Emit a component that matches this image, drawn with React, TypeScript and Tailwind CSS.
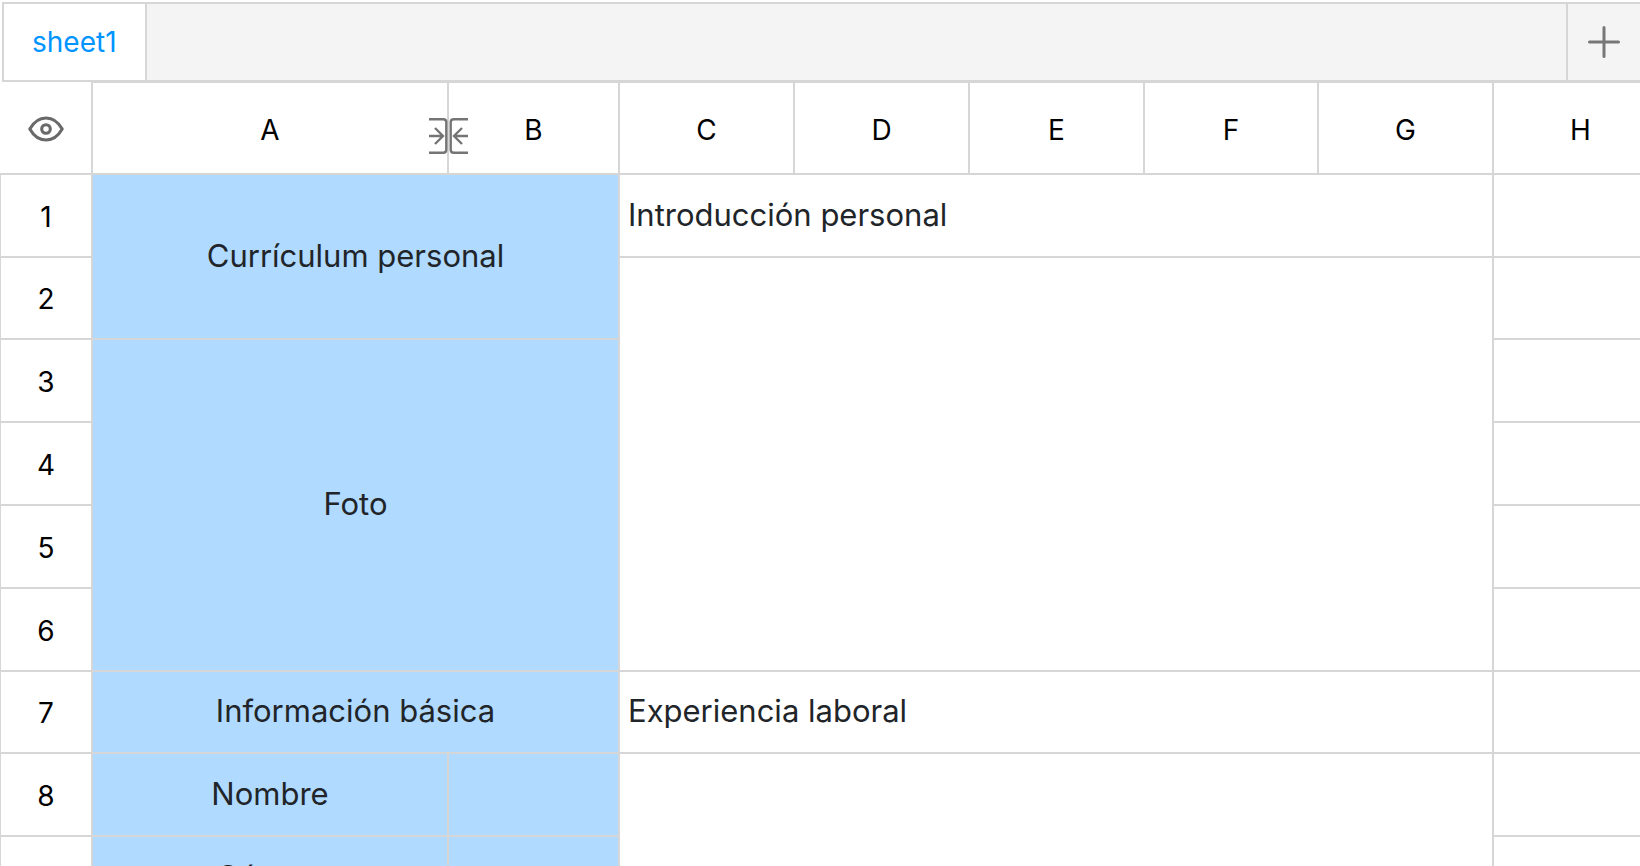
import React from 'react';

interface Column {
  label: string;
  width: string;
}

interface Cell {
  text?: string;
  colSpan?: number;
  rowSpan?: number;
  filled?: boolean;
}

const columns: Column[] = [
  { label: 'A', width: 'w-[356px]' },
  { label: 'B', width: 'w-[171px]' },
  { label: 'C', width: 'w-[175px]' },
  { label: 'D', width: 'w-[175px]' },
  { label: 'E', width: 'w-[175px]' },
  { label: 'F', width: 'w-[174px]' },
  { label: 'G', width: 'w-[175px]' },
  { label: 'H', width: 'w-[175px]' },
];

// One entry per row, merged cells only appear in the row they start in
const rows: Cell[][] = [
  [
    { text: 'Currículum personal', colSpan: 2, rowSpan: 2, filled: true },
    { text: 'Introducción personal', colSpan: 5 },
    {},
  ],
  [{ colSpan: 5, rowSpan: 5 }, {}],
  [{ text: 'Foto', colSpan: 2, rowSpan: 4, filled: true }, {}],
  [{}],
  [{}],
  [{}],
  [
    { text: 'Información básica', colSpan: 2, filled: true },
    { text: 'Experiencia laboral', colSpan: 5 },
    {},
  ],
  [{ text: 'Nombre', filled: true }, { filled: true }, { colSpan: 5, rowSpan: 2 }, {}],
  [{ text: 'Género', filled: true }, { filled: true }, {}],
];

const EyeIcon = () => (
  <svg width="36" height="26" viewBox="0 0 36 26" fill="none" stroke="#696969" strokeWidth="3.1">
    <path d="M1.8 13C5.5 6.5 11 2 18 2S30.5 6.5 34.2 13C30.5 19.5 25 24 18 24S5.5 19.5 1.8 13Z" strokeLinejoin="round" />
    <circle cx="18" cy="13" r="4.3" />
  </svg>
);

const PlusIcon = () => (
  <svg width="32" height="32" viewBox="0 0 32 32" fill="none" stroke="#777777" strokeWidth="3" strokeLinecap="round">
    <path d="M16 1.5V30.5M1.5 16H30.5" />
  </svg>
);

const ResizeIcon = () => (
  <svg width="39" height="36" viewBox="0 0 39 36" fill="none" stroke="#757575" strokeWidth="2.4">
    <path d="M0 1.2H14.3Q17.3 1.2 17.3 4.2V31.8Q17.3 34.8 14.3 34.8H0" />
    <path d="M39 1.2H24.7Q21.7 1.2 21.7 4.2V31.8Q21.7 34.8 24.7 34.8H39" />
    <path d="M0 18H14M6 10L14 18L6 26" />
    <path d="M39 18H25M33 10L25 18L33 26" />
  </svg>
);

const SheetTabs = () => (
  <div className="ml-[2px] flex h-20 border-y-2 border-l-2 border-[#d6d6d6] bg-[#f4f4f4]">
    <button className="border-r-2 border-[#d6d6d6] bg-white px-7 text-[28px] text-[#0094ff]">sheet1</button>
    <div className="flex-1" />
    <button
      aria-label="Add sheet"
      className="flex w-[74px] items-center justify-center border-l-2 border-[#d6d6d6]"
    >
      <PlusIcon />
    </button>
  </div>
);

const App: React.FC = () => {
  return (
    <div className="h-screen overflow-hidden bg-white pt-[2px] font-['Inter','Liberation_Sans',sans-serif]">
      <SheetTabs />

      {/* Grid */}
      <table className="w-max table-fixed border-separate border-spacing-0">
        <thead>
          <tr className="h-[93px] text-[28px] text-black">
            <th className="w-[93px] border-r-2 border-b-2 border-[#d6d6d6] px-0 pt-[2px] pb-0">
              <button aria-label="Show or hide" className="flex w-full items-center justify-center">
                <EyeIcon />
              </button>
            </th>
            {columns.map((column) => (
              <th
                key={column.label}
                className={`${column.width} relative border-t border-r-2 border-b-2 border-[#d6d6d6] px-0 pt-[3px] pb-0 font-normal`}
              >
                {column.label}
                {column.label === 'A' && (
                  <span className="absolute top-[35px] -right-[21px] z-10 cursor-col-resize">
                    <ResizeIcon />
                  </span>
                )}
              </th>
            ))}
          </tr>
        </thead>
        <tbody>
          {rows.map((cells, index) => (
            <tr key={index} className={index % 5 === 1 ? 'h-[82px]' : 'h-[83px]'}>
              <th className="border-r-2 border-b-2 border-l border-[#d6d6d6] px-0 pt-[2px] pb-0 text-[28px] font-normal text-black">
                {index + 1}
              </th>
              {cells.map((cell, i) => (
                <td
                  key={i}
                  colSpan={cell.colSpan}
                  rowSpan={cell.rowSpan}
                  className={`border-r-2 border-b-2 border-[#d6d6d6] px-2 pt-0 pb-[2px] text-[31px] leading-[44px] text-[#212529] ${
                    cell.filled ? 'bg-[#b0daff] text-center' : 'text-left'
                  }`}
                >
                  {cell.text}
                </td>
              ))}
            </tr>
          ))}
        </tbody>
      </table>
    </div>
  );
};

export default App;
